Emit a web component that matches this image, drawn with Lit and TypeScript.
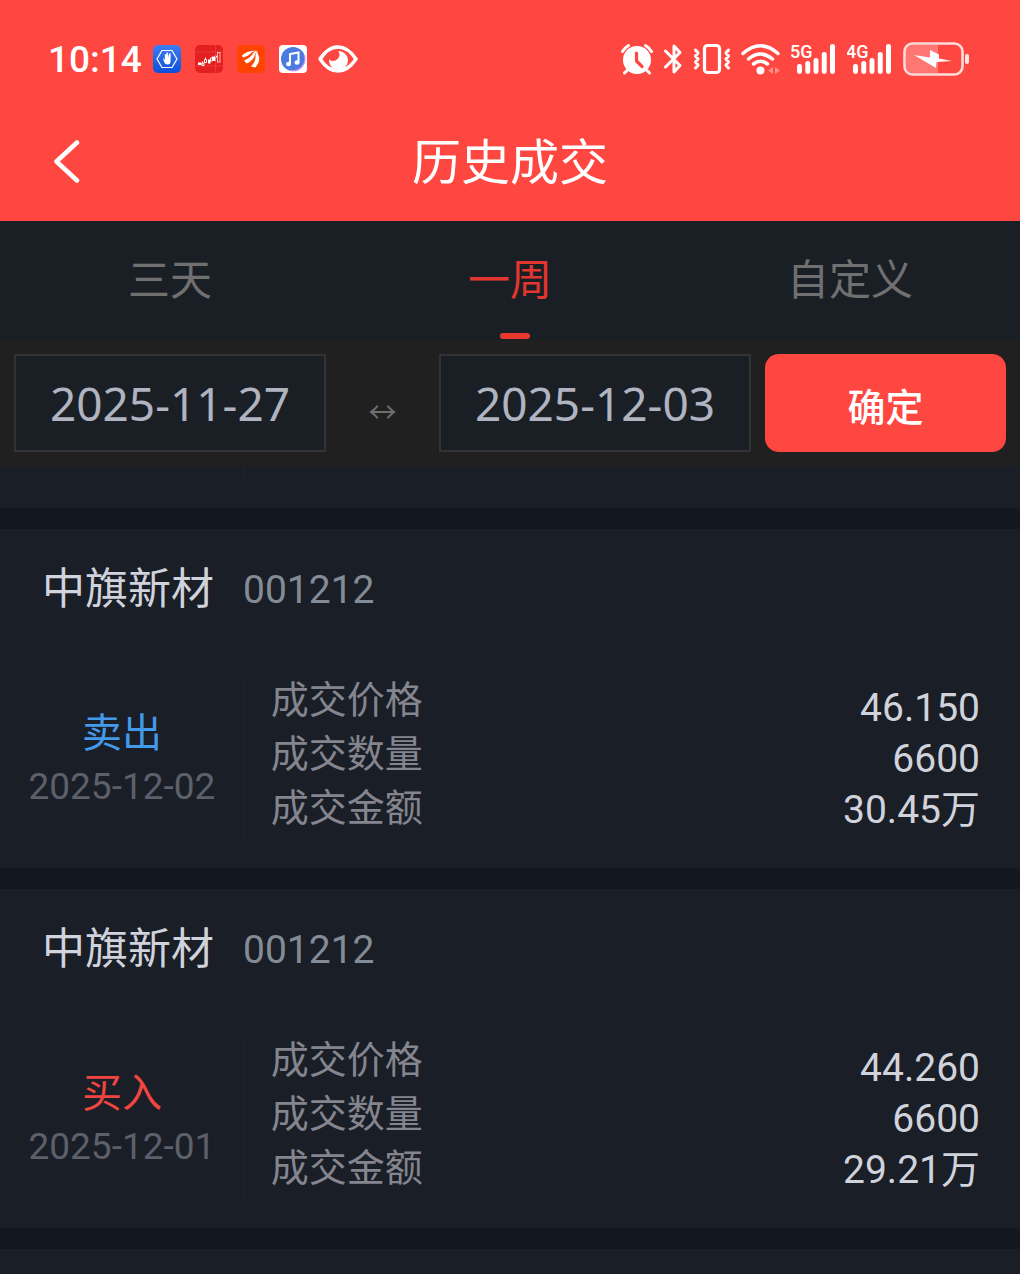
import { LitElement, html, css, svg } from "lit";
import { customElement, property, state } from "lit/decorators.js";
import { classMap } from "lit/directives/class-map.js";

interface Trade {
  name: string;
  code: string;
  side: "buy" | "sell";
  date: string;
  price: string;
  count: string;
  amount: string;
}

const TRADES: Trade[] = [
  { name: "中旗新材", code: "001212", side: "sell", date: "2025-12-02", price: "46.150", count: "6600", amount: "30.45万" },
  { name: "中旗新材", code: "001212", side: "buy", date: "2025-12-01", price: "44.260", count: "6600", amount: "29.21万" },
];

const TABS = ["三天", "一周", "自定义"];

@customElement("status-bar")
class StatusBar extends LitElement {
  static styles = css`
    :host {
      display: flex;
      align-items: center;
      justify-content: space-between;
      height: 118px;
      padding: 0 50px 0 48px;
      color: #fff;
    }
    .side {
      display: flex;
      align-items: center;
    }
    .left {
      gap: 11px;
    }
    .apps {
      display: flex;
      gap: 14px;
    }
    .right {
      gap: 10px;
    }
    .time {
      font: 500 37px/40px Roboto, sans-serif;
      padding-top: 2px;
    }
    svg {
      display: block;
      flex: none;
    }
    .net {
      font: 500 18px Roboto, sans-serif;
      fill: #fff;
    }
  `;

  private signal(label: string) {
    return html`<svg width="46" height="34" viewBox="0 0 46 34" role="img" aria-label=${label}>
      <text class="net" x="-1" y="16">${label}</text>
      ${[22, 19, 16, 10, 2].map(
        (y, i) => svg`<rect x=${6 + i * 8.25} y=${y} width="5" height=${32 - y} rx="2.400" fill="#fff" />`
      )}
    </svg>`;
  }

  render() {
    return html`
      <div class="side left">
        <span class="time">10:14</span>
        <div class="apps">
          <svg width="28" height="28" viewBox="0 0 28 28">
            <defs>
              <linearGradient id="blue" x1="0" y1="0" x2="0" y2="1">
                <stop offset="0" stop-color="#3f7df5" />
                <stop offset="1" stop-color="#0b50d8" />
              </linearGradient>
            </defs>
            <rect width="28" height="28" rx="5" fill="url(#blue)" />
            <path d="M9 5.500h10l5 8.500-5 8.500H9L4 14z" fill="none" stroke="#fff" stroke-width="1.200" />
            <path d="M9.800 12.800l2 2.200V9.200h1.700v3.300V7.500h1.600v5l1-4h1.500V16q0 3.500-3 3.500-2.500 0-3.500-2.500z" fill="#fff" />
          </svg>
          <svg width="28" height="28" viewBox="0 0 28 28">
            <rect width="28" height="28" rx="5" fill="#e3201f" />
            <path d="M0 7h28M0 21h28M20.500 0v28" stroke="#f04a45" stroke-width="1" opacity=".6" />
            <path d="M3 17.500h3.500v2.500H3zM13 14.500h2.500v4H13zM17 11.500h3.500v4.500H17z" fill="#fff" />
            <path d="M7 18h2v2.500H7zM9.500 14.500h2v3h-2zM15.500 13h2v3h-2zM21 10.500l1.500 3M7.500 18v-1.500M10.500 14v-1.500" fill="none" stroke="#fff" stroke-width="1" />
            <rect x="22.500" y="7.500" width="2.500" height="9.500" fill="none" stroke="#ffb9b5" />
          </svg>
          <svg width="28" height="28" viewBox="0 0 28 28">
            <rect width="28" height="28" rx="5" fill="#ff4300" />
            <path d="M5 10.500Q10 5.500 20 5.500q-5 .5-7 3.500-2.500 3-7 3.500zM7 15.500Q13 13 15.500 9q1.500-2.500 4.500-3.300-2 2.300-2.300 5-2 5.300-8.200 7.800zM14 21.500Q19 16 18.500 10.500q0-3 2-4.800-.5 2 1 4.800 2.500 5-3 12z" fill="#fff" />
          </svg>
          <svg width="28" height="28" viewBox="0 0 28 28">
            <rect width="28" height="28" rx="4" fill="#fff" />
            <circle cx="14" cy="14" r="12" fill="#4b7be0" />
            <path d="M25.300 10A12 12 0 0 1 12 25.500" fill="none" stroke="#c58bee" stroke-width="1.300" />
            <path d="M11 19V9l8.500-1.500v10" fill="none" stroke="#fff" stroke-width="2" />
            <ellipse cx="9.500" cy="19" rx="2.500" ry="2.200" fill="#fff" />
            <ellipse cx="18" cy="17.500" rx="2.500" ry="2.200" fill="#fff" />
          </svg>
        </div>
        <svg width="40" height="28" viewBox="0 0 40 28">
          <path d="M2 14Q10 2 20 2t18 12Q30 26 20 26T2 14z" fill="none" stroke="#fff" stroke-width="3.400" stroke-linejoin="round" />
          <circle cx="20.500" cy="15.500" r="9.500" fill="#fff" />
          <circle cx="15" cy="9.500" r="6.500" fill="#ff4741" />
          <path d="M2 14Q10 2 20 2" fill="none" stroke="#fff" stroke-width="3.400" />
        </svg>
      </div>
      <div class="side right">
        <svg width="32" height="32" viewBox="0 0 32 32">
          <circle cx="16" cy="17" r="14" fill="#fff" />
          <path d="M1.500 8.500A17 17 0 0 1 7.500 2.500M30.500 8.500A17 17 0 0 0 24.500 2.500M6 27.500l-2.500 2.500M26 27.500l2.500 2.500" fill="none" stroke="#fff" stroke-width="3" stroke-linecap="round" />
          <path d="M15.500 10v8l5.500 5.500" fill="none" stroke="#ff4741" stroke-width="3.200" stroke-linecap="round" stroke-linejoin="round" />
        </svg>
        <svg width="20" height="32" viewBox="0 0 20 32">
          <path d="M2.500 8L17 22.500l-6 6.500V3l6 6.500L2.500 24" fill="none" stroke="#fff" stroke-width="3" stroke-linecap="round" stroke-linejoin="round" />
        </svg>
        <svg width="38" height="32" viewBox="0 0 38 32">
          <rect x="11.500" y="2.500" width="15" height="27" rx="3" fill="none" stroke="#fff" stroke-width="3.200" />
          <path d="M2.500 7l2.500 3L2.500 13 5 16 2.500 19 5 22l-2.500 3M35.500 7L33 10l2.500 3L33 16l2.500 3L33 22l2.500 3" fill="none" stroke="#fff" stroke-width="3" stroke-linecap="round" stroke-linejoin="round" />
        </svg>
        <svg width="40" height="32" viewBox="0 0 40 32">
          <path d="M2 10.500q17.500-15.500 35 0M7.500 16q12-10 24 0M12.500 21q7-5.500 14 0" fill="none" stroke="#fff" stroke-width="3.500" stroke-linecap="round" />
          <circle cx="19.500" cy="27.500" r="4" fill="#fff" />
          <path d="M32 24v7l-5-3.500zM34 24v7l5-3.500z" fill="#ff8d89" />
        </svg>
        ${this.signal("5G")} ${this.signal("4G")}
        <svg width="67" height="34" viewBox="0 0 67 34">
          <path d="M10 3h25v28H10q-7 0-7-7V10q0-7 7-7z" fill="#ff7672" />
          <rect x="1.500" y="1.500" width="58" height="31" rx="8" fill="none" stroke="#ffdcda" stroke-width="2.600" />
          <rect x="62" y="12" width="4" height="10" rx="2" fill="#ffe4e3" />
          <path d="M11 13l16 2.500V8l9 4.500v4L49 19l-15.500 1L33 26z" fill="#fff" />
        </svg>
      </div>
    `;
  }
}

@customElement("trade-card")
class TradeCard extends LitElement {
  @property({ attribute: false }) trade!: Trade;

  static styles = css`
    :host {
      display: block;
      background: #1a1e26;
      padding-bottom: 27px;
    }
    .head {
      display: flex;
      align-items: center;
      gap: 29px;
      height: 144px;
      padding: 0 42px 24px;
      box-sizing: border-box;
    }
    .name {
      margin: 0;
      font-size: 43px;
      font-weight: 400;
      line-height: 60px;
      color: #d0d3dc;
    }
    .code {
      padding-top: 2px;
      font-size: 39px;
      line-height: 60px;
      color: #838c96;
    }
    .body {
      display: grid;
      grid-template-columns: 24% auto 1fr;
      height: 168px;
    }
    .deal {
      display: flex;
      flex-direction: column;
      align-items: center;
      justify-content: center;
      margin-top: 6px;
      border-right: 1px solid #1f232b;
    }
    .side {
      font-size: 40px;
      line-height: 54px;
    }
    .sell {
      color: #4399ea;
    }
    .buy {
      color: #f04540;
    }
    .date {
      font-size: 37px;
      line-height: 52px;
      color: #5d606b;
    }
    .labels,
    .values {
      display: flex;
      flex-direction: column;
      margin: 0;
      padding: 0;
      list-style: none;
    }
    .labels {
      padding-left: 26px;
      font-size: 38px;
      line-height: 54px;
      color: #84858f;
    }
    .values {
      padding: 10px 40px 0 0;
      text-align: right;
      font-size: 39px;
      line-height: 51px;
      color: #d0d3dc;
    }
  `;

  render() {
    const t = this.trade;
    return html`
      <div class="head">
        <h2 class="name">${t.name}</h2>
        <span class="code">${t.code}</span>
      </div>
      <div class="body">
        <div class="deal">
          <span class="side ${t.side}">${t.side === "sell" ? "卖出" : "买入"}</span>
          <time class="date">${t.date}</time>
        </div>
        <ul class="labels">
          <li>成交价格</li>
          <li>成交数量</li>
          <li>成交金额</li>
        </ul>
        <ul class="values">
          <li>${t.price}</li>
          <li>${t.count}</li>
          <li>${t.amount}</li>
        </ul>
      </div>
    `;
  }
}

@customElement("app-root")
class AppRoot extends LitElement {
  @state() private active = 1;

  static styles = css`
    :host {
      display: flex;
      flex-direction: column;
      min-height: 100vh;
      background: #131720;
      font-family: Roboto, "Noto Sans CJK SC", sans-serif;
    }
    button {
      border: 0;
      background: none;
      padding: 0;
      font-family: inherit;
      cursor: pointer;
    }
    .top {
      background: #ff4741;
      color: #fff;
    }
    .titlebar {
      display: grid;
      grid-template-columns: 1fr auto 1fr;
      align-items: center;
      height: 103px;
      padding: 0 40px 16px;
      box-sizing: border-box;
    }
    .back {
      display: flex;
      justify-self: start;
      padding: 0 12px;
    }
    .title {
      margin: 0;
      padding-top: 4px;
      font-size: 49px;
      font-weight: 400;
      line-height: 72px;
    }
    .tabs {
      display: grid;
      grid-template-columns: repeat(3, 1fr);
      height: 119px;
      background: #1a1f26;
    }
    .tab {
      position: relative;
      font-size: 42px;
      line-height: 60px;
      color: #707070;
    }
    .on {
      color: #e3362f;
    }
    .on::after {
      content: "";
      position: absolute;
      bottom: 1px;
      left: calc(50% - 10px);
      width: 30px;
      height: 6px;
      border-radius: 3px;
      background: #e93730;
    }
    .filter {
      display: grid;
      grid-template-columns: 312fr 85fr 312fr 241fr;
      column-gap: 14px;
      align-items: center;
      padding: 14px;
      background: #202020;
    }
    .day {
      box-sizing: border-box;
      min-width: 0;
      width: 100%;
      height: 98px;
      border: 2px solid #333;
      border-radius: 0;
      background: #1a1f26;
      color: #b0b3c0;
      font: 400 46px "Noto Sans", sans-serif;
      text-align: center;
      padding: 0;
    }
    .arrow {
      text-align: center;
      color: #707070;
      font: 28px/40px "Noto Sans CJK SC", sans-serif;
      padding-top: 16px;
    }
    .ok {
      height: 98px;
      padding-top: 2px;
      border-radius: 14px;
      background: #ff4741;
      color: #fff;
      font-size: 38px;
      font-weight: 500;
    }
    .list {
      display: flex;
      flex: 1;
      flex-direction: column;
      gap: 21px;
    }
    .stub {
      height: 42px;
      background: #1a1e26;
    }
    .stub::before {
      content: "";
      display: block;
      box-sizing: border-box;
      width: 24%;
      height: 15px;
      border-right: 1px solid #1f232b;
    }
    .rest {
      flex: 1;
      min-height: 25px;
      background: #1a1e26;
    }
  `;

  render() {
    return html`
      <header class="top">
        <status-bar></status-bar>
        <div class="titlebar">
          <button class="back" aria-label="返回">
            <svg width="30" height="44" viewBox="0 0 30 44">
              <path d="M25 2.500L4.500 21.500 25 40.500" fill="none" stroke="#fff" stroke-width="4.500" stroke-linecap="round" stroke-linejoin="round" />
            </svg>
          </button>
          <h1 class="title">历史成交</h1>
        </div>
      </header>
      <nav class="tabs">
        ${TABS.map(
          (label, i) => html`<button
            class=${classMap({ tab: true, on: i === this.active })}
            aria-pressed=${i === this.active}
            @click=${() => (this.active = i)}
          >${label}</button>`
        )}
      </nav>
      <form class="filter" @submit=${(e: Event) => e.preventDefault()}>
        <input class="day" type="text" aria-label="开始日期" value="2025-11-27" />
        <span class="arrow">↔</span>
        <input class="day" type="text" aria-label="结束日期" value="2025-12-03" />
        <button class="ok">确定</button>
      </form>
      <main class="list">
        <div class="stub"></div>
        ${TRADES.map((t) => html`<trade-card .trade=${t}></trade-card>`)}
        <div class="rest"></div>
      </main>
    `;
  }
}
